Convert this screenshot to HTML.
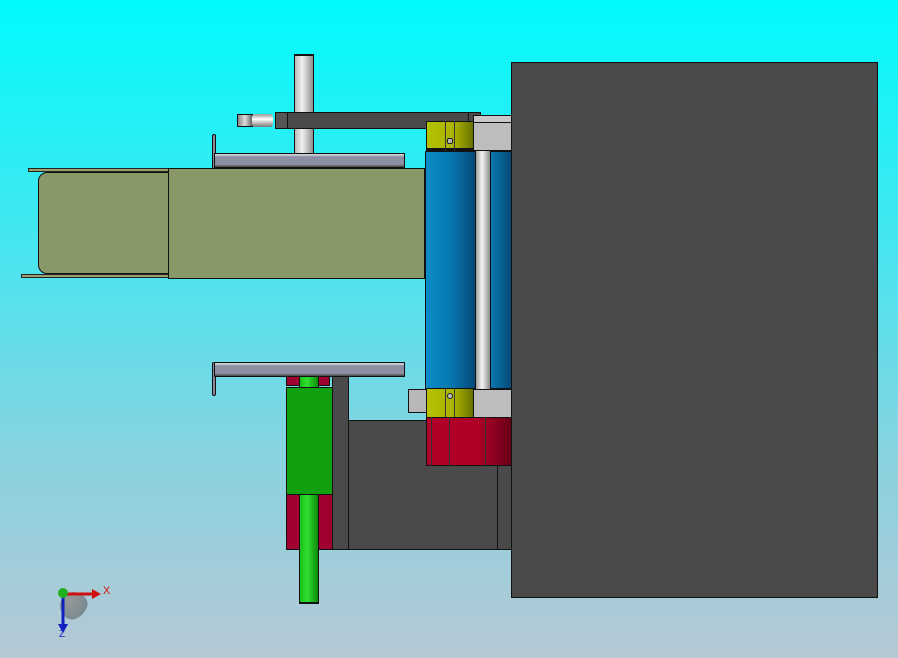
<!DOCTYPE html>
<html><head><meta charset="utf-8"><style>
body{margin:0;width:898px;height:658px;overflow:hidden;position:relative;background:linear-gradient(#00fbfd 0%,#4ce4ee 40%,#8ad2e0 70%,#b6c8d4 100%);font-family:"Liberation Sans",sans-serif}
div{position:absolute;box-sizing:border-box}
.b{border:1px solid #111}
</style></head><body>
<!-- big box -->
<div class="b" style="left:511px;top:62px;width:367px;height:536px;background:#4a4a4a"></div>
<!-- pole -->
<div class="b" style="left:294px;top:54px;width:20px;height:102px;background:linear-gradient(90deg,#b8b8b8,#f0f0f0 40%,#909090);border-top:2px solid #111"></div>
<!-- arm -->
<div class="b" style="left:275px;top:112px;width:206px;height:17px;background:#4a4a4a"></div>
<div class="b" style="left:275px;top:112px;width:13px;height:17px;background:#555"></div>
<div class="b" style="left:468px;top:112px;width:13px;height:10px;background:#4a4a4a"></div>
<!-- fitting -->
<div class="b" style="left:237px;top:114px;width:16px;height:13px;background:linear-gradient(90deg,#888,#ddd,#666)"></div>
<div style="left:252px;top:114px;width:21px;height:13px;background:linear-gradient(#999,#fff 40%,#777);border-radius:3px"></div>
<!-- top bracket -->
<div class="b" style="left:212px;top:134px;width:4px;height:35px;background:#8a8a9a;border-radius:2px"></div>
<div class="b" style="left:214px;top:153px;width:191px;height:15px;background:linear-gradient(#c8ccd8 10%,#8c90a2 20%,#8c90a2 85%,#555 90%)"></div>
<!-- olive -->
<div style="left:28px;top:168px;width:142px;height:4px;background:#9aa070;border:1px solid #222"></div>
<div style="left:21px;top:274px;width:149px;height:4px;background:#9aa070;border:1px solid #222"></div>
<div class="b" style="left:38px;top:172px;width:131px;height:102px;background:#889866;border-radius:9px 0 0 9px"></div>
<div class="b" style="left:168px;top:168px;width:257px;height:111px;background:#889866"></div>
<!-- gray blocks right -->
<div class="b" style="left:473px;top:115px;width:39px;height:8px;background:#c8c8c8"></div>
<div class="b" style="left:473px;top:122px;width:39px;height:29px;background:#bdbdbd"></div>
<div class="b" style="left:473px;top:389px;width:39px;height:29px;background:#bdbdbd"></div>
<div class="b" style="left:408px;top:389px;width:19px;height:24px;background:#b8b8b8"></div>
<!-- blue cylinders -->
<div class="b" style="left:425px;top:151px;width:51px;height:238px;background:linear-gradient(90deg,#0a8cc8,#0878b0 50%,#054a78)"></div>
<div style="left:476px;top:151px;width:15px;height:238px;background:linear-gradient(90deg,#a0a0a0,#f4f4f4 40%,#808080)"></div>
<div class="b" style="left:490px;top:151px;width:22px;height:238px;background:linear-gradient(90deg,#0a78b0,#054a78)"></div>
<!-- yellow collars -->
<div class="b" style="left:426px;top:121px;width:48px;height:30px;background:linear-gradient(90deg,#b4c000,#a8b400 60%,#6a7000);border-bottom:3px solid #111"></div>
<div style="left:445px;top:121px;width:1px;height:30px;background:#333"></div>
<div style="left:454px;top:121px;width:1px;height:30px;background:#333"></div>
<div style="left:447px;top:138px;width:6px;height:6px;background:#bbb;border:1px solid #222;border-radius:2px"></div>
<div class="b" style="left:426px;top:388px;width:48px;height:30px;background:linear-gradient(90deg,#b4c000,#a8b400 60%,#6a7000)"></div>
<div style="left:445px;top:388px;width:1px;height:30px;background:#333"></div>
<div style="left:454px;top:388px;width:1px;height:30px;background:#333"></div>
<div style="left:447px;top:393px;width:6px;height:6px;background:#bbb;border:1px solid #222;border-radius:3px"></div>
<!-- dark box lower -->
<div class="b" style="left:332px;top:376px;width:17px;height:174px;background:#4a4a4a"></div>
<div class="b" style="left:348px;top:420px;width:164px;height:130px;background:#4a4a4a"></div>
<div style="left:497px;top:466px;width:1px;height:84px;background:#111"></div>
<!-- red block -->
<div class="b" style="left:426px;top:417px;width:86px;height:49px;background:linear-gradient(90deg,#b00028,#b00028 60%,#6a0018)"></div>
<div style="left:431px;top:417px;width:1px;height:49px;background:#333"></div>
<div style="left:449px;top:417px;width:1px;height:49px;background:#333"></div>
<div style="left:485px;top:417px;width:1px;height:49px;background:#333"></div>
<!-- bottom bracket -->
<div class="b" style="left:212px;top:362px;width:4px;height:34px;background:#8a8a9a;border-radius:2px"></div>
<div class="b" style="left:214px;top:362px;width:191px;height:15px;background:linear-gradient(#c8ccd8 10%,#8c90a2 20%,#8c90a2 85%,#555 90%)"></div>
<!-- green/red cylinder -->
<div class="b" style="left:286px;top:376px;width:44px;height:10px;background:#a00030"></div>
<div class="b" style="left:286px;top:387px;width:47px;height:108px;background:#10a010"></div>
<div class="b" style="left:286px;top:494px;width:47px;height:56px;background:#a00030"></div>
<div class="b" style="left:299px;top:376px;width:20px;height:12px;background:linear-gradient(90deg,#18c018,#30e030 40%,#0a8a0a)"></div>
<div class="b" style="left:299px;top:494px;width:20px;height:110px;background:linear-gradient(90deg,#18c018,#30e030 40%,#0a8a0a);border-bottom:2px solid #111"></div>
<!-- triad -->
<div style="left:60px;top:592px;width:28px;height:28px;border-radius:50%;background:radial-gradient(circle at 30% 30%,#999,#7a8a90 70%,transparent 72%)"></div>
<svg style="position:absolute;left:40px;top:570px" width="80" height="70">
<line x1="23" y1="24" x2="54" y2="24" stroke="#d01010" stroke-width="3"/>
<polygon points="52,19 61,24 52,29" fill="#d01010"/>
<line x1="23" y1="24" x2="23" y2="56" stroke="#1020c0" stroke-width="3"/>
<polygon points="18,54 23,63 28,54" fill="#1020c0"/>
<circle cx="23" cy="23" r="5" fill="#20b020"/>
<text x="63" y="24" font-size="11" fill="#d01010" font-family="Liberation Sans">X</text>
<text x="19" y="67" font-size="10" fill="#1020c0" font-family="Liberation Sans">Z</text>
</svg>
</body></html>
